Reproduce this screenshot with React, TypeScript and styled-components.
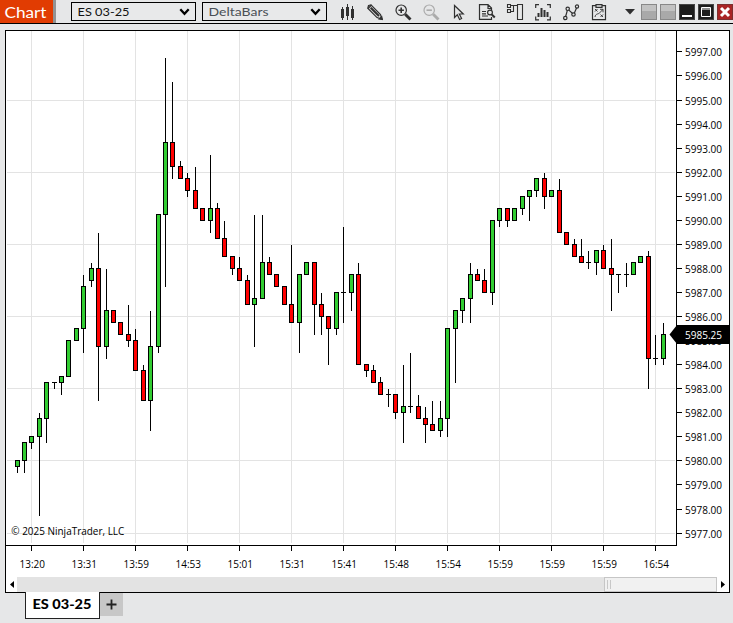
import React from "react";
import styled, { createGlobalStyle } from "styled-components";

const GlobalStyle = createGlobalStyle`
  html, body { margin: 0; padding: 0; }
  body { background: #e6e7e8; overflow: hidden; }
  *, *::before, *::after { box-sizing: border-box; }
  svg { display: block; flex: none; }
`;

const Window = styled.div`
  width: 733px;
  height: 623px;
  display: flex;
  flex-direction: column;
  background: #e6e7e8;
  font-family: "Open Sans", "Noto Sans", sans-serif;
`;

const Toolbar = styled.header`
  display: flex;
  height: 24px;
  flex: none;
  align-items: flex-start;
  border-bottom: 1px solid #000;
`;

const Title = styled.div`
  flex: none;
  width: 56px;
  height: 23px;
  padding-left: 4px;
  background: #e13c02;
  border-right: 3px solid #929394;
  color: #fff;
  display: flex;
  align-items: center;
  margin-right: 15px;
`;

const Select = styled.button<{ $tone: string }>`
  flex: none;
  width: 125px;
  height: 19px;
  margin: 2px 6px 0 0;
  padding: 0 5px;
  border: 1px solid #000;
  background: #e8e9ea;
  color: ${(p) => p.$tone};
  display: flex;
  align-items: center;
  justify-content: space-between;
`;

const Tools = styled.div`
  display: flex;
  flex: none;
  gap: 12px;
  margin: 4px 0 0 6px;
`;

const WindowButtons = styled.div`
  display: flex;
  flex: none;
  gap: 3px;
  margin: 4px 0 0 6px;
`;

const WindowButton = styled.div<{ $bg: string; $edge: string }>`
  width: 16px;
  height: 16px;
  background: ${(p) => p.$bg};
  border: 1px solid ${(p) => p.$edge};
`;

const ChartPanel = styled.main`
  width: 725px;
  height: 563px;
  margin: 6px 0 0 5px;
  flex: none;
  border: 1px solid #000;
  background: #fff;
  display: flex;
  flex-direction: column;
`;

const ScrollBar = styled.div`
  height: 15px;
  display: flex;
  background: #e3e3e3;
`;

const ScrollButton = styled.div<{ $width: number }>`
  width: ${(p) => p.$width}px;
  height: 15px;
  background: #fff;
  display: flex;
  align-items: center;
  justify-content: center;
`;

const ScrollThumb = styled.div`
  width: 113px;
  height: 15px;
  margin-left: auto;
  border: 1px solid #c6c6c6;
  background: #f1f1f1;
  display: flex;
  align-items: center;
  gap: 2px;
  padding-left: 2px;
`;

const Grip = styled.i`
  width: 1px;
  height: 9px;
  background: #c8c8c8;
`;

const Tabs = styled.nav`
  display: flex;
  margin: -1px 0 0 25px;
`;

const Tab = styled.div`
  width: 75px;
  height: 27px;
  background: #fff;
  border: 1px solid #222;
  border-top: none;
  display: flex;
  align-items: flex-start;
  padding: 3px 0 0 6px;
`;

const AddTab = styled.button`
  width: 23px;
  height: 23px;
  margin-top: 1px;
  padding: 0;
  border: none;
  background: #c7c7c7;
  display: flex;
  align-items: center;
  justify-content: center;
`;

interface LabelProps {
  text: string;
  width: number;
  length: number;
  height: number;
  baseline: number;
  size: number;
  weight?: number;
}

const Label = ({ text, width, length, height, baseline, size, weight = 400 }: LabelProps) => (
  <svg width={width} height={height}>
    <text x="0.5" y={baseline} fill="currentColor" fontFamily="Lato, sans-serif" fontSize={size} fontWeight={weight}
      textLength={length} lengthAdjust="spacingAndGlyphs">{text}</text>
  </svg>
);

const Chevron = () => (
  <svg width="11" height="8" viewBox="0 0 11 8">
    <path d="M1.3 1.3 5.5 5.8 9.7 1.3" fill="none" stroke="#000" strokeWidth="2.3" />
  </svg>
);

const Icon = ({ children, color = "#303030" }: { children: React.ReactNode; color?: string }) => (
  <svg width="16" height="17" viewBox="0 0 16 17" overflow="visible" fill="none" stroke={color} strokeWidth="1.2">{children}</svg>
);

const ToolIcons = () => (
  <Tools>
    <Icon>
      <path d="M3.5 3v13M8.5 0v16M13.5 2v14" strokeWidth="1" />
      <path d="M2 5h3v9H2zM7 3h3v9H7zM12 5h3v9h-3z" fill="#303030" stroke="none" />
    </Icon>
    <Icon>
      <path d="M1.5 1.5 4 .8l9.5 9.7 1.5 4.8-5-1.7L.8 4.2z" fill="#d7d7d7" />
      <path d="M3.7 3.7 12 12" strokeWidth="2" />
      <path d="M1 4.5 4.5 1M12.3 15l2.4-2.4.6 2.8z" fill="#303030" />
    </Icon>
    <Icon>
      <circle cx="6.2" cy="6.2" r="5.2" />
      <path d="M3.5 6.2h5.4M6.2 3.5v5.4" strokeWidth="1.6" />
      <path d="m10.2 10.2 5.3 5.3" strokeWidth="2.9" />
    </Icon>
    <Icon color="#ababab">
      <circle cx="6.2" cy="6.2" r="5.2" />
      <path d="M3.5 6.2h5.4" strokeWidth="1.6" />
      <path d="m10.2 10.2 5.3 5.3" strokeWidth="2.9" />
    </Icon>
    <Icon>
      <path d="M3.5 1.5v12l2.8-2.7 2.3 4.7 2-1-2.3-4.5h4z" />
    </Icon>
    <Icon>
      <path d="M12.5 6V4L9 .6H.5v14.8h12V13M9 1v3.5h3.5" />
      <path d="M3 7.5h4M3 9.8h4M3 12h6" />
      <circle cx="11" cy="8.5" r="2.4" />
      <path d="m12.8 10.5 3 3" strokeWidth="2" />
    </Icon>
    <Icon>
      <path d="M.5.5h3v3h-3zM.5 5.5h3v3h-3zM3.5 1.5h7M3.5 7.5h3v-6M10.5.5h5v15h-5z" strokeWidth="1.1" />
    </Icon>
    <Icon>
      <path d="M.7 4V.7H4M12 .7h3.3V4M.7 12.5v3.3H4M12 15.8h3.3v-3.3" />
      <path d="M3.5 9v4M6.5 4v9M9.5 6v7M12.5 8v5" strokeWidth="2" />
    </Icon>
    <Icon>
      <path d="m2.5 13 2.2-8 6 5.5L14 3" />
      <g fill="#e6e7e8"><circle cx="2.3" cy="14" r="1.7" /><circle cx="4.7" cy="4.8" r="1.7" /><circle cx="10.5" cy="10.5" r="1.7" /><circle cx="14" cy="2.5" r="1.6" /></g>
    </Icon>
    <Icon>
      <path d="M1.5 1.7h13v14h-13z" />
      <path d="M5 .6h6v2.8H5z" fill="#e6e7e8" />
      <path d="m4 5 2.5 2.5M6.5 5 4 7.5M9.5 10.5 12 13M12 10.5 9.5 13M4 13c.5-4 4-2.5 5-4.5l2.8-3M9 5.3h3v3" strokeWidth="0.9" />
    </Icon>
  </Tools>
);

const Caret = styled.div`
  flex: none;
  margin: 9px 0 0 18px;
`;

/* Bars are stored in quarter-point ticks relative to 5980: x, high, body top, body bottom, low, kind. */
type Bar = [number, number, number, number, number, "u" | "d" | "n"];
const bars: Bar[] = [
  [17, 0, 0, -1, -2, "u"], [24, 3, 3, 0, -2, "u"], [31, 4, 4, 3, 2, "u"], [39, 8, 7, 4, -9.2, "u"],
  [46, 13, 13, 7, 3, "u"], [54, 13, 13, 13, 12, "n"], [61, 14, 14, 13, 11, "u"], [68, 20, 20, 14, 14, "u"],
  [76, 22, 22, 20, 20, "u"], [83, 31, 29, 22, 18, "u"], [91, 33, 32, 30, 29, "u"], [98, 38, 32, 19, 10, "d"],
  [106, 32, 25, 19, 17, "u"], [113, 25, 25, 23, 23, "d"], [120, 23, 23, 21, 21, "d"], [128, 26, 21, 20, 19, "d"],
  [135, 22, 20, 15, 15, "d"], [143, 16, 15, 10, 10, "d"], [150, 25, 19, 10, 5, "u"], [158, 41, 41, 19, 18, "u"],
  [165, 67.2, 53, 41, 29, "u"], [172, 63.2, 53, 49, 47, "d"], [180, 50, 49, 47, 47, "d"], [187, 48, 47, 45, 44, "d"],
  [195, 49, 45, 42, 42, "d"], [202, 42, 42, 40, 40, "d"], [210, 51, 42, 40, 38, "u"], [217, 43, 42, 37, 37, "d"],
  [224, 40, 37, 34, 34, "d"], [232, 34, 34, 32, 31, "d"], [239, 34, 32, 30, 30, "d"], [247, 31, 30, 26, 26, "d"],
  [254, 41, 27, 26, 19, "u"], [262, 41, 33, 27, 27, "u"], [269, 34, 33, 31, 31, "d"], [276, 31, 31, 29, 29, "d"],
  [284, 29, 29, 26, 26, "d"], [291, 36, 26, 23, 23, "d"], [299, 31, 31, 23, 18, "u"], [306, 33, 33, 31, 31, "u"],
  [314, 33, 33, 26, 21, "d"], [321, 28, 26, 24, 21, "d"], [328, 24, 24, 22, 16, "d"], [336, 28, 28, 22, 21, "u"],
  [343, 39, 28, 28, 23, "n"], [351, 31, 31, 28, 25, "u"], [358, 33, 31, 16, 16, "d"], [366, 16, 16, 15, 14, "d"],
  [373, 16, 15, 13, 13, "d"], [380, 14, 13, 11, 11, "d"], [388, 12, 11, 11, 9, "n"], [395, 11, 11, 8, 7, "d"],
  [403, 16, 9, 8, 3, "u"], [410, 18, 9, 9, 8, "n"], [418, 11, 9, 7, 7, "d"], [425, 9, 7, 6, 3, "d"],
  [432, 10, 6, 5, 5, "d"], [440, 10, 7, 5, 4, "u"], [447, 22, 22, 7, 4, "u"], [455, 25, 25, 22, 13, "u"],
  [462, 27, 27, 25, 23, "u"], [470, 33, 31, 27, 23, "u"], [477, 32, 31, 30, 30, "d"], [484, 32, 30, 28, 28, "d"],
  [492, 40, 40, 28, 26, "u"], [499, 42, 42, 40, 39, "u"], [507, 42, 42, 40, 39, "d"], [514, 42, 42, 40, 40, "u"],
  [522, 44, 44, 42, 41, "u"], [529, 45, 45, 44, 40, "u"], [536, 47, 47, 45, 44, "u"], [544, 48, 47, 44, 42, "d"],
  [551, 45, 45, 44, 44, "u"], [559, 47, 45, 38, 38, "d"], [566, 38, 38, 36, 36, "d"], [574, 37, 36, 34, 34, "d"],
  [581, 37, 34, 33, 33, "d"], [588, 35, 33, 33, 32, "n"], [596, 35, 35, 33, 31, "u"], [603, 36, 35, 32, 32, "d"],
  [611, 37, 32, 31, 25, "d"], [618, 31, 31, 31, 28, "n"], [626, 33, 31, 31, 29, "n"], [633, 33, 33, 31, 31, "u"],
  [640, 34, 34, 33, 33, "u"], [648, 35, 34, 17, 12, "d"], [655, 21, 17, 17, 16, "n"], [663, 23, 21, 17, 16, "u"],
];

const yOf = (tick: number) => Math.round(460 - tick * 6);

const priceYs = [51, 75, 100, 124, 148, 172, 196, 220, 244, 268, 292, 316, 340, 364, 388, 412, 436, 460, 484, 509, 533];
const gridYs = [100, 172, 244, 316, 388, 460, 533];
const times = ["13:20", "13:31", "13:59", "14:53", "15:01", "15:31", "15:41", "15:48", "15:54", "15:59", "15:59", "15:59", "16:54"];
const fills = { u: "#32cd32", d: "#ff0000", n: "#000" };

const Candle = ({ bar: [x, high, top, bottom, low, kind] }: { bar: Bar }) => {
  const start = high > top ? yOf(high) + 1 : yOf(top);
  return (
    <>
      <rect x={x} y={start} width="1" height={yOf(low) - start + 1} fill="#000" />
      {kind === "n"
        ? <rect x={x - 2} y={yOf(top)} width="5" height="1" fill="#000" />
        : <rect x={x - 1.5} y={yOf(top) + 0.5} width="4" height={yOf(bottom) - yOf(top)} fill={fills[kind]} stroke="#000" />}
    </>
  );
};

const Chart = () => (
  <svg width="723" height="546" viewBox="6 31 723 546" fontFamily='"Open Sans", "Noto Sans", sans-serif' fontSize="11">
    <g fill="#e3e3e3">
      {gridYs.map((y) => <rect key={y} x="7" y={y} width="668" height="1" />)}
      {times.map((_, i) => <rect key={i} x={31 + i * 52} y="31" width="1" height="512" />)}
    </g>
    {bars.map((bar) => <Candle key={bar[0]} bar={bar} />)}
    <rect x="676" y="31" width="1" height="515" />
    <rect x="6" y="545" width="671" height="1" />
    {priceYs.map((y, i) => (
      <g key={y}>
        <rect x="677" y={y} width="5" height="1" />
        <text x="685" y={y + 5} textLength="37" lengthAdjust="spacingAndGlyphs">{`${5997 - i}.00`}</text>
      </g>
    ))}
    {times.map((t, i) => (
      <g key={i}>
        <rect x={31 + i * 52} y="546" width="1" height="5" />
        <text x={19.5 + i * 52} y="568" textLength="25.5" lengthAdjust="spacingAndGlyphs">{t}</text>
      </g>
    ))}
    <path d="M669.5 334.5 677 325h52v19h-52z" />
    <text x="685" y="339" fill="#fff" textLength="37" lengthAdjust="spacingAndGlyphs">5985.25</text>
    <text x="11.3" y="535" textLength="113" lengthAdjust="spacingAndGlyphs">© 2025 NinjaTrader, LLC</text>
  </svg>
);

export default function App() {
  return (
    <>
      <GlobalStyle />
      <Window>
        <Toolbar>
          <Title><Label text="Chart" width={45} length={42} height={22} baseline={16.5} size={15.5} /></Title>
          <Select $tone="#111"><Label text="ES 03-25" width={70} length={52} height={17} baseline={13} size={12} /><Chevron /></Select>
          <Select $tone="#4a4f55"><Label text="DeltaBars" width={70} length={60} height={17} baseline={13} size={12} /><Chevron /></Select>
          <ToolIcons />
          <Caret><svg width="10" height="6"><path d="M0 0h10L5 5.5z" fill="#303030" /></svg></Caret>
          <WindowButtons>
            <WindowButton $bg="linear-gradient(#c2c2c2 40%, #a9a9a9 40%)" $edge="#888" />
            <WindowButton $bg="linear-gradient(#c2c2c2 40%, #a9a9a9 40%)" $edge="#888" />
            <WindowButton $bg="#1c1c1c" $edge="#444"><svg width="14" height="14"><path d="M2 10h10v2H2z" fill="#fff" /></svg></WindowButton>
            <WindowButton $bg="#1c1c1c" $edge="#444"><svg width="14" height="14"><path d="M2.5 2.5h9v9h-9zM2 4h10" fill="none" stroke="#fff" /></svg></WindowButton>
            <WindowButton $bg="#a92525" $edge="#7c3030"><svg width="14" height="14"><path d="m3 3 8 8M11 3l-8 8" stroke="#fff" strokeWidth="3" /></svg></WindowButton>
          </WindowButtons>
        </Toolbar>
        <ChartPanel>
          <Chart />
          <ScrollBar>
            <ScrollButton $width={11}><svg width="4" height="7"><path d="M4 0v7L0 3.5z" /></svg></ScrollButton>
            <ScrollThumb><Grip /><Grip /></ScrollThumb>
            <ScrollButton $width={12}><svg width="4" height="7"><path d="M0 0v7l4-3.5z" /></svg></ScrollButton>
          </ScrollBar>
        </ChartPanel>
        <Tabs>
          <Tab><Label text="ES 03-25" width={62} length={59} height={18} baseline={14} size={12.5} weight={900} /></Tab>
          <AddTab aria-label="Add tab"><svg width="11" height="11"><path d="M5.5.5v10M.5 5.5h10" stroke="#222" strokeWidth="1.8" /></svg></AddTab>
        </Tabs>
      </Window>
    </>
  );
}
